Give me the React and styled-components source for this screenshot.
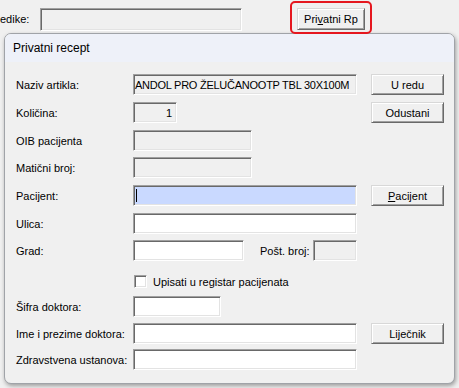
import React from 'react';
import styled, { createGlobalStyle } from 'styled-components';

const GlobalStyle = createGlobalStyle`
  html, body { margin: 0; padding: 0; background: #f0f0f0; overflow: hidden; }
  body { font-family: "Liberation Sans", Arial, sans-serif; font-size: 11px; color: #000; }
`;

const Screen = styled.div`
  width: 459px;
  height: 388px;
  overflow: hidden;
  background: #f0f0f0;
`;

// the main window behind the dialog
const TopBar = styled.div`
  display: flex;
  align-items: flex-start;
  height: 33px;
  padding-top: 8px;
  box-sizing: border-box;
`;

const TopLabel = styled.span`
  width: 40px;
  line-height: 23px;
  flex: none;
`;

const Highlight = styled.span`
  position: relative;
  display: inline-flex;
  margin-left: 55px;
  &::after {
    content: '';
    position: absolute;
    left: -7px;
    right: -7px;
    top: -7px;
    bottom: -4px;
    border: 2px solid #e5171f;
    border-radius: 5px;
    z-index: 2;
  }
`;

const Dialog = styled.div`
  margin-left: 4px;
  width: 451px;
  height: 351px;
  box-sizing: border-box;
  border: 1px solid #a0a3a8;
  border-radius: 7px;
  background: #f0f0f0;
  box-shadow: 1px 2px 4px rgba(0, 0, 0, 0.35);
  overflow: hidden;
  display: flex;
  flex-direction: column;
`;

const TitleBar = styled.div`
  height: 28px;
  flex: none;
  display: flex;
  align-items: center;
  padding-left: 8px;
  background: #eef1f9;
  font-size: 12px;
`;

const Body = styled.div`
  display: flex;
  flex-direction: column;
  padding: 12px 10px 0 11px;
`;

const Row = styled.div`
  display: flex;
  align-items: center;
  height: ${p => p.$h || 21}px;
  margin-top: ${p => p.$mt || 0}px;
`;

const Label = styled.span`
  width: ${p => p.$w || 117}px;
  margin-left: ${p => p.$ml || 0}px;
  flex: none;
  white-space: nowrap;
`;

const fieldBg = {
  ro: '#f0f0f0',
  white: '#ffffff',
  focus: '#c9d9ff',
};

const Field = styled.div`
  width: ${p => p.$w}px;
  height: ${p => p.$h || 21}px;
  flex: none;
  box-sizing: border-box;
  border: 1px solid;
  border-color: #a0a0a0 #ffffff #ffffff #a0a0a0;
  box-shadow: inset 1px 1px #696969, inset -1px -1px #e3e3e3;
  background: ${p => fieldBg[p.$bg || 'white']};
  display: flex;
  align-items: center;
  justify-content: ${p => (p.$right ? 'flex-end' : 'flex-start')};
  padding: 0 4px 0 1px;
  letter-spacing: ${p => (p.$tight ? '-0.25px' : 'normal')};
  overflow: hidden;
  white-space: nowrap;
`;

const Caret = styled.span`
  width: 1px;
  height: 13px;
  margin-left: 1px;
  background: #000;
`;

const Button = styled.button`
  width: ${p => p.$w || 73}px;
  height: ${p => p.$h || 21}px;
  margin-left: ${p => (p.$ml !== undefined ? `${p.$ml}px` : 'auto')};
  flex: none;
  box-sizing: border-box;
  padding: 0;
  font: inherit;
  color: #000;
  background: #f0f0f0;
  border: 1px solid;
  border-color: #d8d8d8 #696969 #696969 #d8d8d8;
  box-shadow: inset 1px 1px #ffffff, inset -1px -1px #a0a0a0;
  cursor: default;
`;

const U = styled.span`
  text-decoration: underline;
`;

const Check = styled.span`
  width: 13px;
  height: 13px;
  margin-left: 1px;
  box-sizing: border-box;
  flex: none;
  background: #fff;
  border: 1px solid;
  border-color: #a0a0a0 #ffffff #ffffff #a0a0a0;
  box-shadow: inset 1px 1px #696969, inset -1px -1px #e3e3e3;
`;

const CheckText = styled.span`
  margin-left: 6px;
`;

const Gap = styled.span`
  width: ${p => p.$w}px;
  flex: none;
`;

const App = () => {
  return (
    <Screen>
      <GlobalStyle />
      <TopBar>
        <TopLabel>edike:</TopLabel>
        <Field $w={202} $h={23} $bg="ro" />
        <Highlight>
          <Button $w={68} $h={22} $ml={0}>Pri<U>v</U>atni Rp</Button>
        </Highlight>
      </TopBar>
      <Dialog>
        <TitleBar>Privatni recept</TitleBar>
        <Body>
          <Row>
            <Label>Naziv artikla:</Label>
            <Field $w={224} $bg="ro" $tight>ANDOL PRO ŽELUČANOOTP TBL 30X100M</Field>
            <Button>U redu</Button>
          </Row>
          <Row $mt={7}>
            <Label>Količina:</Label>
            <Field $w={44} $bg="ro" $right>1</Field>
            <Button>Odustani</Button>
          </Row>
          <Row $mt={7}>
            <Label>OIB pacijenta</Label>
            <Field $w={119} $bg="ro" />
          </Row>
          <Row $mt={6}>
            <Label>Matični broj:</Label>
            <Field $w={119} $bg="ro" />
          </Row>
          <Row $mt={7}>
            <Label>Pacijent:</Label>
            <Field $w={224} $bg="focus"><Caret /></Field>
            <Button><U>P</U>acijent</Button>
          </Row>
          <Row $mt={7}>
            <Label>Ulica:</Label>
            <Field $w={224} />
          </Row>
          <Row $mt={6}>
            <Label>Grad:</Label>
            <Field $w={111} />
            <Label $w={53} $ml={16}>Pošt. broj:</Label>
            <Field $w={44} $bg="ro" />
          </Row>
          <Row $mt={14} $h={13}>
            <Gap $w={117} />
            <Check />
            <CheckText>Upisati u registar pacijenata</CheckText>
          </Row>
          <Row $mt={8}>
            <Label>Šifra doktora:</Label>
            <Field $w={88} />
          </Row>
          <Row $mt={6}>
            <Label>Ime i prezime doktora:</Label>
            <Field $w={224} />
            <Button>Liječnik</Button>
          </Row>
          <Row $mt={5}>
            <Label>Zdravstvena ustanova:</Label>
            <Field $w={224} />
          </Row>
        </Body>
      </Dialog>
    </Screen>
  );
};

export default App;
